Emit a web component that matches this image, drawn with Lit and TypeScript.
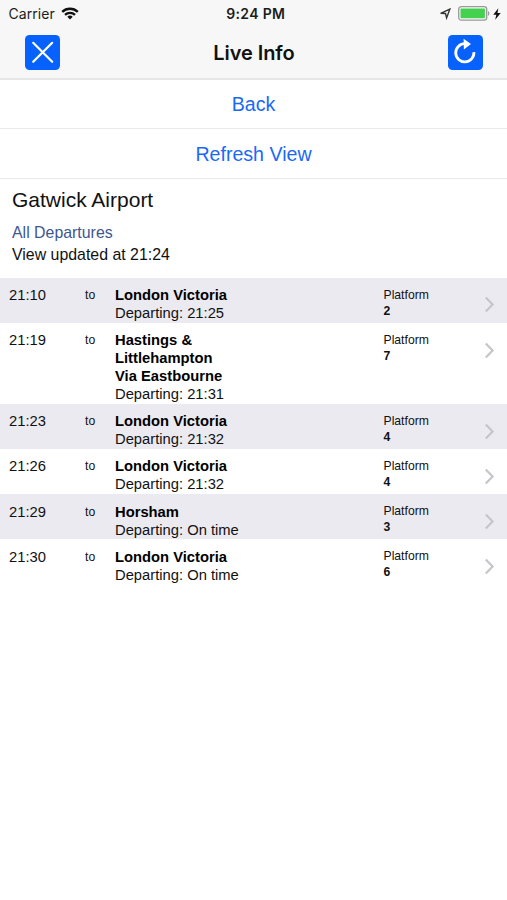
import { LitElement, html, css } from "lit";
import { customElement, property } from "lit/decorators.js";

interface Departure {
  time: string;
  lines: string[];
  status: string;
  platform: string;
}

const departures: Departure[] = [
  { time: "21:10", lines: ["London Victoria"], status: "21:25", platform: "2" },
  { time: "21:19", lines: ["Hastings &", "Littlehampton", "Via Eastbourne"], status: "21:31", platform: "7" },
  { time: "21:23", lines: ["London Victoria"], status: "21:32", platform: "4" },
  { time: "21:26", lines: ["London Victoria"], status: "21:32", platform: "4" },
  { time: "21:29", lines: ["Horsham"], status: "On time", platform: "3" },
  { time: "21:30", lines: ["London Victoria"], status: "On time", platform: "6" },
];

@customElement("status-bar")
class StatusBar extends LitElement {
  static styles = css`
    :host {
      display: grid;
      grid-template-columns: 1fr auto 1fr;
      align-items: center;
      height: 27px;
      padding: 0 6px 0 8.5px;
      font: 14px/27px Inter, sans-serif;
      color: #1c1c1c;
    }
    .left, .right { display: flex; align-items: center; }
    .left { gap: 6.5px; }
    .carrier { letter-spacing: 0.05px; }
    .clock { font-weight: 600; font-size: 14px; letter-spacing: 0.35px; padding-left: 2px; }
    .right { justify-content: flex-end; gap: 6px; }
    .power { display: flex; align-items: center; gap: 3px; }
    svg { display: block; }
  `;
  render() {
    return html`
      <div class="left">
        <span class="carrier">Carrier</span>
        <svg width="18" height="13" viewBox="0 0 18 13" fill="none" stroke="#111" stroke-width="2.3">
          <path d="M1.2 4.9a11.2 11.2 0 0 1 15.6 0" />
          <path d="M4 7.9a7.2 7.2 0 0 1 10 0" />
          <path d="M9 12.4 6.3 9.8a3.9 3.9 0 0 1 5.4 0z" fill="#111" stroke="none" />
        </svg>
      </div>
      <div class="clock">9:24 PM</div>
      <div class="right">
        <svg width="13" height="12" viewBox="0 0 13 12" fill="none" stroke="#333" stroke-width="1.4">
          <path d="M10.8 1.2 1.6 5.4l4.9.1 1.1 4.4z" />
        </svg>
        <div class="power">
          <svg width="32" height="15" viewBox="0 0 32 15">
            <rect x=".7" y=".7" width="28" height="13.4" rx="2.6" fill="#fafafa" stroke="#999" stroke-width="1.3" />
            <rect x="2.5" y="2.5" width="24.4" height="9.8" rx=".8" fill="#43d14f" />
            <path d="M30 5c1.8.7 1.8 4.1 0 4.8z" fill="#999" />
          </svg>
          <svg width="8" height="12" viewBox="0 0 8 12" fill="#111">
            <path d="M5.3.2.3 6.8h3L2.2 11.8 7.7 4.9H4.5z" />
          </svg>
        </div>
      </div>
    `;
  }
}

@customElement("nav-bar")
class NavBar extends LitElement {
  static styles = css`
    :host {
      display: flex;
      align-items: center;
      justify-content: space-between;
      height: 51px;
      padding: 0 24px 0 25px;
    }
    .button {
      width: 35px;
      height: 35px;
      border: 0;
      padding: 0;
      border-radius: 4.5px;
      background: #0762fd;
    }
    .title {
      font: 600 20px/24px Inter, sans-serif;
      letter-spacing: -0.08px;
      color: #111;
    }
    svg { display: block; }
  `;
  render() {
    return html`
      <button class="button" aria-label="Close">
        <svg width="35" height="35" viewBox="0 0 35 35" stroke="#fff" stroke-width="2.2" stroke-linecap="round">
          <path d="M8.2 7.8 27.2 26.8M27.2 7.8 8.2 26.8" />
        </svg>
      </button>
      <div class="title">Live Info</div>
      <button class="button" aria-label="Refresh">
        <svg width="35" height="35" viewBox="0 0 35 35" fill="none">
          <path d="M16.8 8.7A9.1 9.1 0 1 0 25.9 17.2" stroke="#fff" stroke-width="2.8" />
          <path d="M15.6 3.8 23 9 15.9 14.6z" fill="#fff" />
        </svg>
      </button>
    `;
  }
}

@customElement("departure-row")
class DepartureRow extends LitElement {
  @property({ attribute: false }) item!: Departure;
  static styles = css`
    :host {
      display: grid;
      grid-template-columns: 76px 30px 268.5px 1fr 23px;
      align-items: start;
      padding: 8.2px 0 0.9px 9px;
      font-size: 14.75px;
      line-height: 18px;
      color: #111;
    }
    .to { font-size: 12.2px; }
    .dest { font-weight: 700; color: #000; }
    .platform { font-size: 12.2px; line-height: 16px; padding-top: 0.8px; }
    .number { font-weight: 700; }
    .chevron { display: block; margin-top: 10.3px; }
  `;
  render() {
    const d = this.item;
    return html`
      <div>${d.time}</div>
      <div class="to">to</div>
      <div>
        ${d.lines.map((l) => html`<div class="dest">${l}</div>`)}
        <div>Departing: ${d.status}</div>
      </div>
      <div class="platform">
        <div>Platform</div>
        <div class="number">${d.platform}</div>
      </div>
      <svg class="chevron" width="12" height="17" viewBox="0 0 12 17" fill="none" stroke="#c5c5ca" stroke-width="2.2">
        <path d="M1.8 1.5 8.6 8.5 1.8 15.5" />
      </svg>
    `;
  }
}

@customElement("app-root")
class AppRoot extends LitElement {
  static styles = css`
    :host {
      display: block;
      height: 900px;
      background: #fff;
      font-family: "Liberation Sans", Arial, sans-serif;
      color: #111;
    }
    .top { background: #f7f7f7; border-bottom: 2px solid #e6e6e6; }
    .action {
      height: 48px;
      border-bottom: 1px solid #e9e9e9;
      margin-bottom: 1px;
      font-size: 19.6px;
      line-height: 49px;
      text-align: center;
      color: #1a69f6;
    }
    .heading { padding: 8px 12px 12px; }
    .station { font-size: 21px; line-height: 24px; margin-bottom: 10px; }
    .link { font-size: 15.9px; line-height: 22px; color: #40568f; }
    .updated { font-size: 15.9px; line-height: 22px; }
    .row:nth-child(odd) { background: #ebeaf1; }
  `;
  render() {
    return html`
      <div class="top">
        <status-bar></status-bar>
        <nav-bar></nav-bar>
      </div>
      <div class="action">Back</div>
      <div class="action">Refresh View</div>
      <div class="heading">
        <div class="station">Gatwick Airport</div>
        <div class="link">All Departures</div>
        <div class="updated">View updated at 21:24</div>
      </div>
      <div class="list">
        ${departures.map((d) => html`<departure-row class="row" .item=${d}></departure-row>`)}
      </div>
    `;
  }
}
